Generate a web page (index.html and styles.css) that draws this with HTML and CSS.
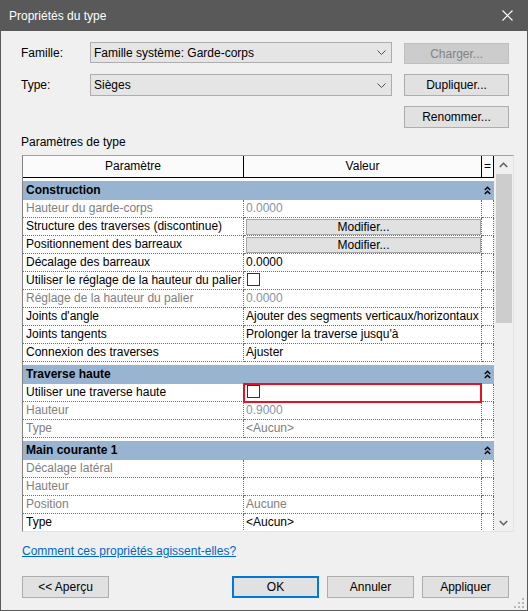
FILE: index.html
```html
<!DOCTYPE html>
<html lang="fr">
<head>
<meta charset="utf-8">
<title>Propriétés du type</title>
<link rel="stylesheet" href="styles.css">
</head>
<body>
<div class="window">
  <header class="titlebar">
    <span class="title">Propriétés du type</span>
    <svg class="close" width="11" height="11" viewBox="0 0 11 11"><path d="M0.5 0.5L10.5 10.5M10.5 0.5L0.5 10.5" stroke="#ffffff" stroke-width="1.1" fill="none"/></svg>
  </header>
  <main class="content">
    <div class="form">
      <span class="lbl">Famille:</span>
      <div class="combo r1"><span>Famille système: Garde-corps</span><svg width="9" height="5" viewBox="0 0 9 5"><path d="M0.5 0.5L4.5 4.5L8.5 0.5" stroke="#505050" fill="none"/></svg></div>
      <button class="btn disabled r1b">Charger...</button>
      <span class="lbl">Type:</span>
      <div class="combo"><span>Sièges</span><svg width="9" height="5" viewBox="0 0 9 5"><path d="M0.5 0.5L4.5 4.5L8.5 0.5" stroke="#505050" fill="none"/></svg></div>
      <button class="btn">Dupliquer...</button>
      <span></span><span></span>
      <button class="btn">Renommer...</button>
    </div>
    <div class="section-label">Paramètres de type</div>
    <div class="table">
      <div class="grid">
        <div class="row head"><div class="c p">Paramètre</div><div class="c v">Valeur</div><div class="c e">=</div></div>

        <div class="band"><span class="bt">Construction</span><span></span><span class="bi"><svg width="7" height="9" viewBox="0 0 7 9"><path d="M0.8 4L3.5 1.2L6.2 4M0.8 8L3.5 5.2L6.2 8" stroke="#000" stroke-width="1.4" fill="none"/></svg></span></div>
        <div class="row"><div class="c p dis">Hauteur du garde-corps</div><div class="c v num">0.0000</div><div class="c e"></div></div>
        <div class="row"><div class="c p">Structure des traverses (discontinue)</div><div class="c v btncell"><span class="mod">Modifier...</span></div><div class="c e"></div></div>
        <div class="row"><div class="c p">Positionnement des barreaux</div><div class="c v btncell"><span class="mod">Modifier...</span></div><div class="c e"></div></div>
        <div class="row"><div class="c p">Décalage des barreaux</div><div class="c v">0.0000</div><div class="c e"></div></div>
        <div class="row"><div class="c p">Utiliser le réglage de la hauteur du palier</div><div class="c v"><span class="chk"></span></div><div class="c e"></div></div>
        <div class="row"><div class="c p dis">Réglage de la hauteur du palier</div><div class="c v num">0.0000</div><div class="c e"></div></div>
        <div class="row"><div class="c p">Joints d'angle</div><div class="c v">Ajouter des segments verticaux/horizontaux</div><div class="c e"></div></div>
        <div class="row"><div class="c p">Joints tangents</div><div class="c v">Prolonger la traverse jusqu'à</div><div class="c e"></div></div>
        <div class="row"><div class="c p">Connexion des traverses</div><div class="c v">Ajuster</div><div class="c e"></div></div>

        <div class="band"><span class="bt">Traverse haute</span><span></span><span class="bi"><svg width="7" height="9" viewBox="0 0 7 9"><path d="M0.8 4L3.5 1.2L6.2 4M0.8 8L3.5 5.2L6.2 8" stroke="#000" stroke-width="1.4" fill="none"/></svg></span></div>
        <div class="row"><div class="c p">Utiliser une traverse haute</div><div class="c v focus"><span class="chk"></span></div><div class="c e"></div></div>
        <div class="row"><div class="c p dis">Hauteur</div><div class="c v num">0.9000</div><div class="c e"></div></div>
        <div class="row"><div class="c p dis">Type</div><div class="c v dis">&lt;Aucun&gt;</div><div class="c e"></div></div>

        <div class="band"><span class="bt">Main courante 1</span><span></span><span class="bi"><svg width="7" height="9" viewBox="0 0 7 9"><path d="M0.8 4L3.5 1.2L6.2 4M0.8 8L3.5 5.2L6.2 8" stroke="#000" stroke-width="1.4" fill="none"/></svg></span></div>
        <div class="row"><div class="c p dis">Décalage latéral</div><div class="c v"></div><div class="c e"></div></div>
        <div class="row"><div class="c p dis">Hauteur</div><div class="c v"></div><div class="c e"></div></div>
        <div class="row"><div class="c p dis">Position</div><div class="c v dis">Aucune</div><div class="c e"></div></div>
        <div class="row"><div class="c p">Type</div><div class="c v">&lt;Aucun&gt;</div><div class="c e"></div></div>
      </div>
      <div class="scrollbar">
        <div class="arrow"><svg width="9" height="6" viewBox="0 0 9 6"><path d="M0.8 5L4.5 1.3L8.2 5" stroke="#606060" stroke-width="1.6" fill="none"/></svg></div>
        <div class="track"><div class="thumb"></div></div>
        <div class="arrow"><svg width="9" height="6" viewBox="0 0 9 6"><path d="M0.8 1L4.5 4.7L8.2 1" stroke="#606060" stroke-width="1.6" fill="none"/></svg></div>
      </div>
    </div>
    <a class="help" href="#">Comment ces propriétés agissent-elles?</a>
    <div class="actions">
      <button class="btn wide">&lt;&lt; Aperçu</button>
      <div class="right">
        <button class="btn wide default">OK</button>
        <button class="btn wide">Annuler</button>
        <button class="btn wide">Appliquer</button>
      </div>
    </div>
  </main>
  <svg class="grip" width="10" height="10" viewBox="0 0 10 10">
    <rect x="8" y="0" width="2" height="2" fill="#b8b8b8"/>
    <rect x="4" y="4" width="2" height="2" fill="#b8b8b8"/>
    <rect x="8" y="4" width="2" height="2" fill="#b8b8b8"/>
    <rect x="0" y="8" width="2" height="2" fill="#b8b8b8"/>
    <rect x="4" y="8" width="2" height="2" fill="#b8b8b8"/>
    <rect x="8" y="8" width="2" height="2" fill="#b8b8b8"/>
  </svg>
</div>
</body>
</html>
```
FILE: styles.css
```css
body {
  margin: 0;
  background: #f0f0f0;
  font-family: "Liberation Sans", Arial, sans-serif;
  font-size: 12px;
  color: #000;
}

.window {
  position: relative;
  width: 528px;
  height: 611px;
  box-sizing: border-box;
  border: 1px solid #595959;
  border-top: none;
  background: #f0f0f0;
}

.titlebar {
  height: 31px;
  background: #595959;
  color: #ffffff;
  display: flex;
  align-items: center;
  justify-content: space-between;
  padding: 0 14px 0 8px;
}

.title {
  font-size: 12px;
}

.content {
  padding: 11px 0 0 20px;
}

.form {
  display: grid;
  grid-template-columns: 57px 302px 105px;
  grid-template-rows: 22px 22px 22px;
  column-gap: 12px;
  row-gap: 10px;
  align-items: center;
}

.lbl {
  line-height: 15px;
}

.combo {
  height: 22px;
  box-sizing: border-box;
  border: 1px solid #adadad;
  background: #e5e5e5;
  display: flex;
  align-items: center;
  justify-content: space-between;
  padding: 0 5px 0 3px;
}

.combo.r1 {
  height: 21px;
  align-self: start;
}

.btn {
  height: 22px;
  box-sizing: border-box;
  border: 1px solid #adadad;
  background: #e1e1e1;
  font-family: inherit;
  font-size: 12px;
  color: #000;
  padding: 0;
  margin: 0;
}

.btn.r1b {
  align-self: end;
  height: 21px;
}

.btn.disabled {
  background: #cccccc;
  border-color: #bfbfbf;
  color: #838383;
}

.section-label {
  margin-top: 7px;
  line-height: 15px;
  margin-bottom: 5px;
}

.table {
  margin-left: 1px;
  width: 492px;
  height: 377px;
  box-sizing: border-box;
  border-top: 1px solid #a0a0a0;
  border-left: 1px solid #828282;
  border-right: 1px solid #e3e3e3;
  border-bottom: 1px solid #e3e3e3;
  display: flex;
  overflow: hidden;
}

.grid {
  width: 471px;
  height: 375px;
  background: #ffffff;
  overflow: hidden;
}

.row {
  display: grid;
  grid-template-columns: 221px 238px 12px;
  height: 18px;
}

.c {
  box-sizing: border-box;
  border-right: 1px dotted #6e6e6e;
  border-bottom: 1px dotted #6e6e6e;
  line-height: 17px;
  white-space: nowrap;
  overflow: hidden;
  position: relative;
}

.c.p {
  padding-left: 3px;
}

.c.v {
  padding-left: 2px;
}

.row.head {
  height: 22px;
  background: #fbfbfb;
}

.row.head .c {
  border-right: 1px solid #000;
  border-bottom: 1px solid #000;
  line-height: 21px;
  text-align: center;
  padding-left: 0;
}

.dis {
  color: #808080;
}

.num {
  color: #8593a6;
}

.btncell {
  padding: 1px 0 0 1px;
  overflow: visible;
}

.mod {
  display: block;
  height: 16px;
  box-sizing: border-box;
  border: 1px solid #a6a6a6;
  background: #e1e1e1;
  text-align: center;
  line-height: 14px;
}

.chk {
  display: inline-block;
  width: 13px;
  height: 13px;
  box-sizing: border-box;
  border: 1px solid #333333;
  background: #ffffff;
  margin-left: 1px;
  vertical-align: middle;
  position: relative;
  top: -1px;
}

.focus {
  overflow: visible;
}

.focus::after {
  content: "";
  position: absolute;
  left: -1px;
  right: -1px;
  top: -1px;
  bottom: -2px;
  border: 2px solid #e81123;
}

.band {
  margin-top: 3px;
  height: 19px;
  background: #99b4d1;
  display: grid;
  grid-template-columns: 221px 238px 12px;
  font-weight: bold;
  line-height: 19px;
}

.bt {
  padding-left: 3px;
  white-space: nowrap;
}

.bi {
  display: flex;
  align-items: center;
  justify-content: center;
  padding-right: 1px;
}

.scrollbar {
  width: 19px;
  height: 375px;
  background: #f0f0f0;
  display: flex;
  flex-direction: column;
}

.arrow {
  height: 17px;
  display: flex;
  align-items: center;
  justify-content: center;
}

.track {
  flex: 1;
  padding: 1px 1px 0 2px;
}

.thumb {
  height: 149px;
  background: #cdcdcd;
}

.help {
  display: inline-block;
  margin-left: 1px;
  margin-top: 12px;
  line-height: 15px;
  color: #0066cc;
  text-decoration: underline;
}

.actions {
  margin-left: 1px;
  margin-top: 17px;
  width: 487px;
  display: flex;
  justify-content: space-between;
}

.right {
  display: flex;
  gap: 8px;
}

.btn.wide {
  width: 87px;
}

.btn.default {
  border: 2px solid #0078d7;
}

.grip {
  position: absolute;
  right: 3px;
  bottom: 2px;
}
```
